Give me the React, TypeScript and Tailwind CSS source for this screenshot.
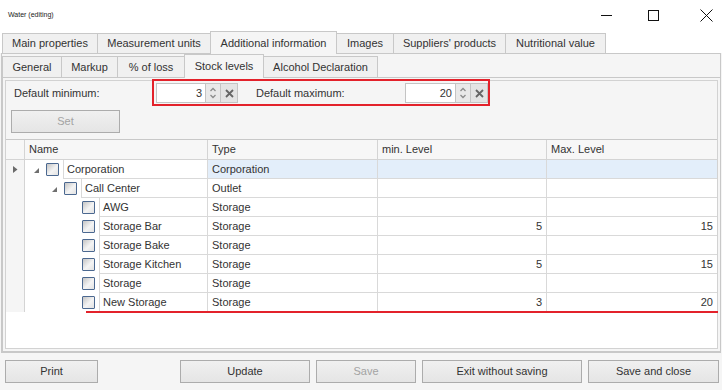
import React from 'react';

const mainTabs = [
  { label: 'Main properties', w: 'w-[96px]' },
  { label: 'Measurement units', w: 'w-[114px]' },
  { label: 'Additional information', w: 'w-[127px]', active: true },
  { label: 'Images', w: 'w-[58px]' },
  { label: "Suppliers' products", w: 'w-[113px]' },
  { label: 'Nutritional value', w: 'w-[101px]' },
];

const subTabs = [
  { label: 'General', w: 'w-[60px]' },
  { label: 'Markup', w: 'w-[57px]' },
  { label: '% of loss', w: 'w-[68px]' },
  { label: 'Stock levels', w: 'w-[80px]', active: true },
  { label: 'Alcohol Declaration', w: 'w-[115px]' },
];

type Row = {
  name: string;
  type: string;
  level: 0 | 1 | 2;
  expand?: boolean;
  min?: string;
  max?: string;
  focused?: boolean;
};

const rows: Row[] = [
  { name: 'Corporation', type: 'Corporation', level: 0, expand: true, focused: true },
  { name: 'Call Center', type: 'Outlet', level: 1, expand: true },
  { name: 'AWG', type: 'Storage', level: 2 },
  { name: 'Storage Bar', type: 'Storage', level: 2, min: '5', max: '15' },
  { name: 'Storage Bake', type: 'Storage', level: 2 },
  { name: 'Storage Kitchen', type: 'Storage', level: 2, min: '5', max: '15' },
  { name: 'Storage', type: 'Storage', level: 2 },
  { name: 'New Storage', type: 'Storage', level: 2, min: '3', max: '20' },
];

const indent = ['w-[38px]', 'w-[56px]', 'w-[74px]'];

function Check() {
  return (
    <span className="block w-[13px] h-[13px] border border-[#4b6890] rounded-[1px] bg-[linear-gradient(135deg,#c4c4c4_0%,#f4f4f4_55%,#e2e2e2_100%)]" />
  );
}

function SpinEdit({ value, w }: { value: string; w: string }) {
  return (
    <div className="flex h-[20px]">
      <div className={`${w} h-full bg-white border border-[#c4c4c4] flex items-center justify-end pr-[3px] text-[#333]`}>
        {value}
      </div>
      <div className="w-[15px] h-full border-y border-r border-[#c4c4c4] bg-[#e9e9e9] flex items-center justify-center">
        <svg width="8" height="14" viewBox="0 0 8 14">
          <path d="M1.5 5 L4 2.5 L6.5 5 M1.5 9 L4 11.5 L6.5 9" stroke="#8c8c8c" strokeWidth="1.3" fill="none" />
        </svg>
      </div>
      <div className="w-[17px] h-full border-y border-r border-[#c4c4c4] bg-[#e4e4e4] flex items-center justify-center">
        <svg width="9" height="9" viewBox="0 0 9 9">
          <path d="M1 1 L8 8 M8 1 L1 8" stroke="#666" strokeWidth="1.8" />
        </svg>
      </div>
    </div>
  );
}

function Btn({ label, w, disabled }: { label: string; w: string; disabled?: boolean }) {
  return (
    <div
      className={`${w} h-[23px] border border-[#acacac] bg-[linear-gradient(#f0f0f0,#e5e5e5)] flex items-center justify-center ${
        disabled ? 'text-[#a3a3a3]' : 'text-[#333]'
      }`}
    >
      {label}
    </div>
  );
}

export default function App() {
  return (
    <div className="relative w-[722px] h-[390px] overflow-hidden bg-[#f5f5f5] flex flex-col font-['Liberation_Sans',Arial,sans-serif] text-[11px] text-[#333]">
      {/* title bar */}
      <div className="h-[31px] bg-white flex items-center">
        <span className="pl-[8px] text-[7px] text-[#222]">Water (editing)</span>
        <div className="ml-auto flex h-full">
          <div className="w-[46px] flex items-center justify-center">
            <svg width="11" height="11" viewBox="0 0 11 11">
              <path d="M0 5.5 H11" stroke="#111" strokeWidth="1" />
            </svg>
          </div>
          <div className="w-[48px] flex items-center justify-center">
            <svg width="11" height="11" viewBox="0 0 11 11">
              <rect x="0.5" y="0.5" width="10" height="10" stroke="#111" strokeWidth="1" fill="none" />
            </svg>
          </div>
          <div className="w-[45px] flex items-center justify-end pr-[9px]">
            <svg width="13" height="13" viewBox="0 0 13 13">
              <path d="M0.5 0.5 L12.5 12.5 M12.5 0.5 L0.5 12.5" stroke="#111" strokeWidth="1" />
            </svg>
          </div>
        </div>
      </div>

      {/* main tabs */}
      <div className="h-[22px] bg-white flex items-end pl-[2px]">
        {mainTabs.map((t, i) => (
          <div
            key={t.label}
            className={`${t.w} ${i > 0 ? '-ml-px' : ''} border border-b-0 border-[#c8c8c8] flex items-center justify-center ${
              t.active ? 'relative z-10 h-[23px] -mb-px bg-[#f5f5f5]' : 'h-[20px] bg-[#f0f0f0]'
            }`}
          >
            {t.label}
          </div>
        ))}
      </div>

      {/* main page */}
      <div className="ml-[1px] w-[720px] h-[300px] border border-[#c8c8c8] bg-[#f5f5f5] flex flex-col">
        <div className="h-[23px] flex items-end">
          {subTabs.map((t, i) => (
            <div
              key={t.label}
              className={`${t.w} ${i > 0 ? '-ml-px' : ''} border border-b-0 border-[#c8c8c8] flex items-center justify-center ${
                t.active ? 'relative z-10 h-[24px] -mb-px bg-[#f5f5f5]' : 'h-[21px] bg-[#f0f0f0]'
              }`}
            >
              {t.label}
            </div>
          ))}
        </div>

        <div className="flex-1 border border-r-0 border-[#c8c8c8] p-[2px] flex flex-col">
          <div className="flex-1 border border-[#d2d2d2] flex flex-col">
            {/* defaults */}
            <div className="h-[24px] flex items-center pl-[8px]">
              <span className="w-[142px]">Default minimum:</span>
              <SpinEdit value="3" w="w-[50px]" />
              <span className="ml-[18px] w-[149px]">Default maximum:</span>
              <SpinEdit value="20" w="w-[51px]" />
            </div>
            <div className="pl-[5px] mt-[5px]">
              <Btn label="Set" w="w-[109px]" disabled />
            </div>

            {/* grid */}
            <div className="mt-[6px] flex-1 bg-white border-t border-[#c8c8c8] flex flex-col">
              <div className="h-[20px] flex bg-[#f7f7f7] border-b border-[#d4d4d4]">
                <div className="w-[19px] border-r border-[#d4d4d4]" />
                <div className="w-[183px] border-r border-[#d4d4d4] pl-[4px] flex items-center">Name</div>
                <div className="w-[170px] border-r border-[#d4d4d4] pl-[4px] flex items-center">Type</div>
                <div className="w-[169px] border-r border-[#d4d4d4] pl-[4px] flex items-center">min. Level</div>
                <div className="flex-1 pl-[4px] flex items-center">Max. Level</div>
              </div>
              {rows.map((r) => (
                <div key={r.name} className="h-[19px] flex">
                  <div className="w-[19px] bg-[#f5f5f5] border-r border-[#d4d4d4] flex items-center pl-[7px]">
                    {r.focused && (
                      <svg width="5" height="7" viewBox="0 0 5 7">
                        <path d="M0 0 L4.5 3.5 L0 7 Z" fill="#6a6a6a" />
                      </svg>
                    )}
                  </div>
                  <div className="w-[183px] border-r border-[#d9d9d9] flex">
                    <div className={`${indent[r.level]} shrink-0 flex items-center justify-end pr-[4px]`}>
                      {r.expand && (
                        <svg width="5" height="5" viewBox="0 0 5 5" className="mr-[7px] mt-[2px]">
                          <path d="M5 0 L5 5 L0 5 Z" fill="#6f6f6f" />
                        </svg>
                      )}
                      <Check />
                    </div>
                    <div className="flex-1 border-l border-b border-[#d9d9d9] pl-[3px] flex items-center whitespace-nowrap">
                      {r.name}
                    </div>
                  </div>
                  <div
                    className={`w-[170px] border-r border-b border-[#d9d9d9] pl-[4px] flex items-center ${
                      r.focused ? 'bg-[#e3eefa]' : ''
                    }`}
                  >
                    {r.type}
                  </div>
                  <div
                    className={`w-[169px] border-r border-b border-[#d9d9d9] pr-[4px] flex items-center justify-end ${
                      r.focused ? 'bg-[#e3eefa]' : ''
                    }`}
                  >
                    {r.min}
                  </div>
                  <div
                    className={`flex-1 border-b border-[#d9d9d9] pr-[4px] flex items-center justify-end ${
                      r.focused ? 'bg-[#e3eefa]' : ''
                    }`}
                  >
                    {r.max}
                  </div>
                </div>
              ))}
            </div>
          </div>
        </div>
      </div>

      {/* buttons */}
      <div className="flex pt-[7px] pl-[5px]">
        <Btn label="Print" w="w-[93px]" />
        <div className="ml-[82px] flex gap-[6px]">
          <Btn label="Update" w="w-[130px]" />
          <Btn label="Save" w="w-[100px]" disabled />
          <Btn label="Exit without saving" w="w-[160px]" />
          <Btn label="Save and close" w="w-[131px]" />
        </div>
      </div>

      {/* highlight annotations */}
      <div className="absolute left-[152px] top-[79px] w-[338px] h-[27px] border-2 border-[#e3222b]" />
      <div className="absolute left-[86px] top-[311px] w-[632px] h-[2px] bg-[#e3222b]" />
    </div>
  );
}
